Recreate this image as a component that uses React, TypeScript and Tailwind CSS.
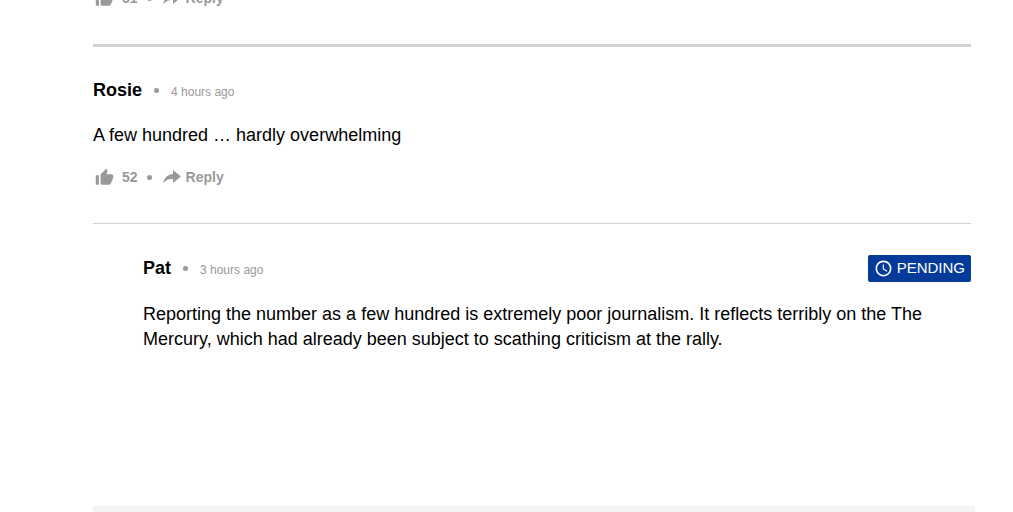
import React from "react";
import { MdAccessTime, MdThumbUp } from "react-icons/md";

type Comment = {
    author: string;
    time: string;
    text: string;
    likes?: number;
};

const rosieComment: Comment = {
    author: "Rosie",
    time: "4 hours ago",
    text: "A few hundred … hardly overwhelming",
    likes: 52,
};

const patReply: Comment = {
    author: "Pat",
    time: "3 hours ago",
    text: "Reporting the number as a few hundred is extremely poor journalism. It reflects terribly on the The Mercury, which had already been subject to scathing criticism at the rally.",
};

export default function App() {
    return (
        <main className="h-screen overflow-hidden bg-white font-['Liberation_Sans',Arial,sans-serif] text-black">
            {/* The thread is scrolled, so the first row is cut by the top edge */}
            <div className="-mt-3 pr-[38px] pl-[93px]">
                <div className="pr-1">
                    <CommentActions likes={51} />
                    <hr className="mt-9 border-t-3 border-[#d3d3d3]" />

                    <article className="pt-[31px] pb-9">
                        <CommentHeader
                            author={rosieComment.author}
                            time={rosieComment.time}
                        />
                        <p className="mt-5 mb-[19px] text-lg leading-[25px]">
                            {rosieComment.text}
                        </p>
                        <CommentActions likes={rosieComment.likes ?? 0} />
                    </article>
                    <hr className="border-[#d3d3d3]" />

                    <article className="pt-[31px] pb-[154px] pl-[50px]">
                        <div className="flex items-center justify-between">
                            <CommentHeader
                                author={patReply.author}
                                time={patReply.time}
                            />
                            <PendingBadge />
                        </div>
                        <p className="mt-5 text-lg leading-[25px]">
                            {patReply.text}
                        </p>
                    </article>
                </div>
                <div className="h-6 bg-[#f4f4f4]" />
            </div>
        </main>
    );
}

function Dot() {
    return <span className="size-[5px] shrink-0 rounded-full bg-[#999]" />;
}

function CommentHeader({ author, time }: { author: string; time: string }) {
    return (
        <header className="flex items-center">
            <h3 className="mr-3 text-lg leading-[25px] font-bold">{author}</h3>
            <Dot />
            <time className="ml-3 pt-[2px] text-xs leading-4 text-[#999]">
                {time}
            </time>
        </header>
    );
}

function CommentActions({ likes }: { likes: number }) {
    return (
        <div className="flex h-5 items-center pl-[2px] text-sm leading-5 font-bold text-[#999]">
            <button
                type="button"
                aria-label="Like"
                className="flex items-center gap-2"
            >
                <MdThumbUp className="size-[19px]" />
                <span>{likes}</span>
            </button>
            <span className="mr-[11px] ml-[9px] flex">
                <Dot />
            </span>
            <button type="button" className="flex items-center gap-[5px]">
                <ReplyIcon />
                <span>Reply</span>
            </button>
        </div>
    );
}

function ReplyIcon() {
    return (
        <svg
            viewBox="3 5 18 14"
            fill="currentColor"
            aria-hidden="true"
            className="h-[14px] w-[18px]"
        >
            <path d="M13 9V5l8 6.500-8 6.500v-4c-5 0-7.500 1.200-10 4.500 1-5 4-9 10-9.500z" />
        </svg>
    );
}

function PendingBadge() {
    return (
        <span className="flex h-[27px] items-center gap-1 rounded-xs bg-[#043b9b] px-[6px] text-[15px] text-white">
            <MdAccessTime className="size-[19px]" />
            PENDING
        </span>
    );
}
